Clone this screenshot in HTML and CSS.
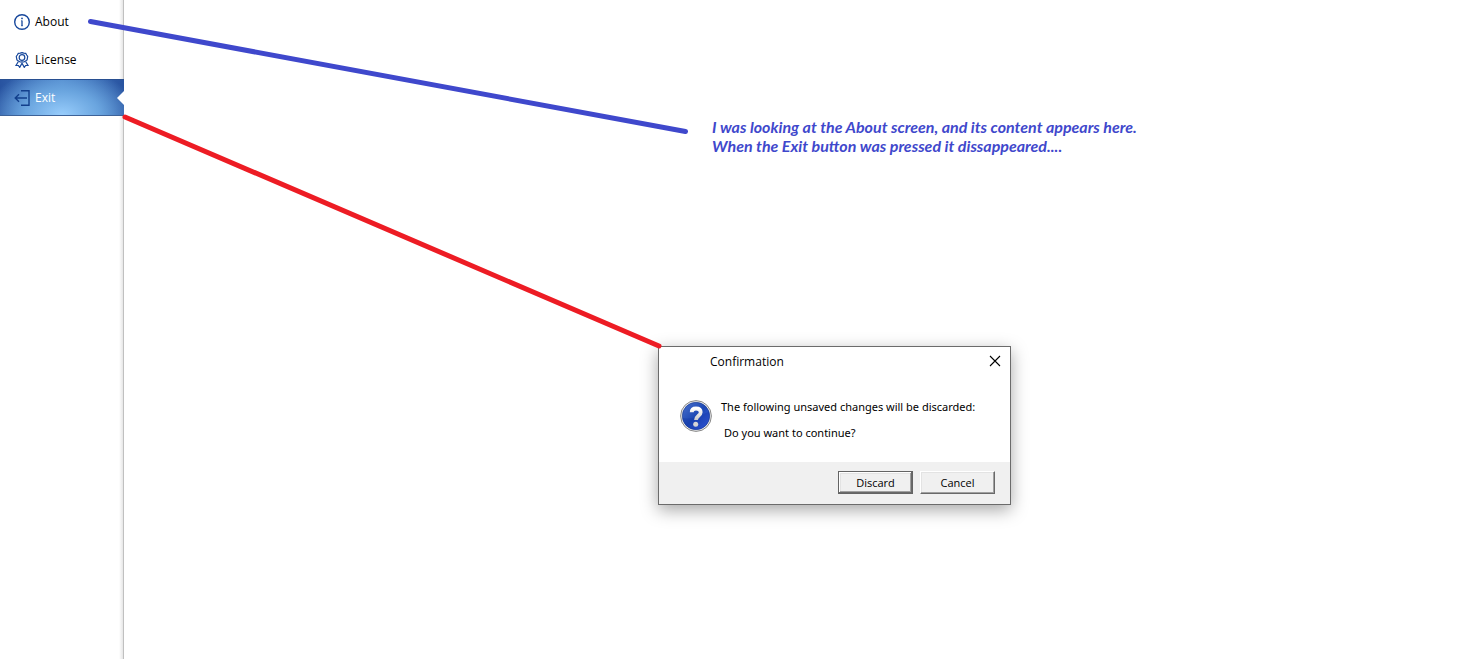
FILE: index.html
```html
<!DOCTYPE html>
<html lang="en">
<head>
<meta charset="utf-8">
<title>Confirmation</title>
<link rel="stylesheet" href="styles.css">
</head>
<body>
<div class="app">
  <nav class="sidebar">
    <button class="nav-item" type="button">
      <svg class="nav-icon" viewBox="0 0 16 16" width="16" height="16" fill="none" stroke="#17479b">
        <circle cx="8" cy="8" r="7.300" stroke-width="1.400"/>
        <path d="M8 6.500v5.500" stroke-width="1.300"/>
        <path d="M7 6.800h1M7 11.800h2" stroke-width=".6"/>
        <rect x="7.200" y="3.700" width="1.600" height="1.500" fill="#17479b" stroke="none"/>
      </svg>
      <span>About</span>
    </button>
    <button class="nav-item" type="button">
      <svg class="nav-icon" viewBox="0 0 16 16" width="16" height="16" fill="none" stroke="#17479b">
        <path d="M8 .6l1.800.5 1.900.3 1 1.600 1 1.500-.3 1.700-.3 1.700-1.600 1.100L9.900 10 8 9.900 6.100 10 4.500 9 2.900 7.900l-.3-1.700-.3-1.700 1-1.500 1-1.600 1.900-.3z" stroke-width="1.200"/>
        <circle cx="8" cy="5.500" r="2.800" stroke-width="1.200"/>
        <path d="M4.400 9.500L2 13.400l2.400.1 1.300 1.900L8 11.200l2.300 4.200 1.300-1.900 2.400-.1-2.400-3.900" stroke-width="1.200"/>
      </svg>
      <span>License</span>
    </button>
    <button class="nav-item nav-item-active" type="button">
      <svg class="nav-icon" viewBox="0 0 16 16" width="16" height="16" fill="none" stroke="#123f8c" stroke-width="1.400">
        <path d="M7 .8h8v14.400H7M13 8H1.200M5 4.200L1.200 8 5 11.800"/>
      </svg>
      <span>Exit</span>
    </button>
  </nav>
  <main class="stage">
    <p class="note">I was looking at the About screen, and its content appears here.<br>When the Exit button was pressed it dissappeared....</p>
    <section class="dialog" role="dialog" aria-labelledby="dialog-title">
      <header class="dialog-header">
        <h1 class="dialog-title" id="dialog-title">Confirmation</h1>
        <button class="close" type="button" aria-label="Close">
          <svg viewBox="0 0 12 12" width="12" height="12" stroke="#000" stroke-width="1.100"><path d="M1 1l10 10M11 1L1 11"/></svg>
        </button>
      </header>
      <div class="dialog-body">
        <svg class="question" viewBox="0 0 32 32" width="32" height="32">
          <defs>
            <linearGradient id="ball" x1="0" y1="0" x2="1" y2="1"><stop offset="0" stop-color="#4a70cc"/><stop offset=".5" stop-color="#1c48b4"/><stop offset="1" stop-color="#3f64ee"/></linearGradient>
            <linearGradient id="mark" x1="0" y1="0" x2="0" y2="1"><stop offset="0" stop-color="#fff"/><stop offset="1" stop-color="#c9c9c9"/></linearGradient>
          </defs>
          <circle cx="16" cy="16" r="15.400" fill="#eee" stroke="#898989"/>
          <circle cx="16" cy="16" r="13.700" fill="url(#ball)" stroke="#12358c" stroke-width=".6"/>
          <path d="M2.500 18C12 20 22 15 29 11.500A13.700 13.700 0 0 1 16 29.500C9 29.500 3.500 25 2.500 18z" fill="#0e2fa0" opacity=".3"/>
          <path d="M11.700 12.300C11.700 9.300 13.500 8.500 16 8.500c2.700 0 4.700 1.200 4.700 3.700 0 3.500-4.700 3.600-4.700 7.800" fill="none" stroke="url(#mark)" stroke-width="3.800"/>
          <circle cx="15.700" cy="24.300" r="2.500" fill="#d5d5d5"/>
        </svg>
        <div class="message">
          <p>The following unsaved changes will be discarded:</p>
          <p class="prompt">Do you want to continue?</p>
        </div>
      </div>
      <footer class="dialog-footer">
        <button class="btn btn-default" type="button">Discard</button>
        <button class="btn" type="button">Cancel</button>
      </footer>
    </section>
  </main>
  <svg class="pointers" width="700" height="360" viewBox="0 0 700 360" fill="none" stroke-width="5" stroke-linecap="round" aria-hidden="true">
    <path d="M90.500 21.500L685.500 131.500" stroke="#3f48cc"/>
    <path d="M125 117L659 346" stroke="#ed1c24"/>
  </svg>
</div>
</body>
</html>
```
FILE: styles.css
```css
* {
  box-sizing: border-box;
}

body {
  margin: 0;
  background: #fff;
  color: #000;
  font-family: "Open Sans", "Noto Sans", sans-serif;
  font-size: 11px;
}

p,
h1 {
  margin: 0;
}

button {
  font: inherit;
  color: inherit;
}

.app {
  position: relative;
  display: grid;
  grid-template-columns: 124px 1fr;
  min-height: 100vh;
}

.sidebar {
  display: flex;
  flex-direction: column;
  gap: 1px;
  padding-top: 3px;
  background: linear-gradient(to left, #c0c0c0 1px, #e6e6e6 1px, #fff 5px);
}

.nav-item {
  display: flex;
  align-items: center;
  gap: 5px;
  height: 37px;
  padding: 0 14px;
  border: 0;
  background: none;
  font-size: 12px;
}

.nav-icon {
  flex: none;
}

.nav-item-active {
  position: relative;
  border-top: 1px solid #284f91;
  border-bottom: 1px solid #3d6298;
  background: radial-gradient(ellipse 75px 48px at 50% 100%, #98cdfc, #6aa5df 50%, transparent 100%), linear-gradient(to right, #2853a0, #4a82c8 50%, #2853a0);
  color: #fff;
}

.nav-item-active::after {
  content: "";
  position: absolute;
  top: 11px;
  right: 0;
  border: 7px solid transparent;
  border-right-color: #fff;
  border-left-width: 0;
}

.stage {
  position: relative;
}

.note {
  position: absolute;
  top: 117px;
  left: 588px;
  color: #3f48cc;
  font-family: Lato, sans-serif;
  font-size: 16px;
  font-style: italic;
  font-weight: 700;
  line-height: 19px;
  white-space: nowrap;
}

.dialog {
  position: absolute;
  top: 346px;
  left: 534px;
  width: 353px;
  border: 1px solid #6b6b6b;
  background: #fff;
  box-shadow: 0 5px 16px rgba(0, 0, 0, 0.35);
}

.dialog-header {
  display: flex;
  align-items: center;
  justify-content: space-between;
  height: 28px;
  padding: 0 9px 0 51px;
}

.dialog-title {
  font-size: 12px;
  font-weight: 400;
}

.close {
  display: flex;
  padding: 0;
  border: 0;
  background: none;
}

.dialog-body {
  display: flex;
  gap: 9px;
  padding: 24px 21px 21px;
}

.question {
  flex: none;
  margin-top: 1px;
}

.message {
  display: grid;
  gap: 10px;
  font-family: "Noto Sans", "Open Sans", sans-serif;
  line-height: 16px;
  white-space: nowrap;
}

.prompt {
  padding-left: 3px;
}

.dialog-footer {
  display: flex;
  justify-content: flex-end;
  gap: 7px;
  padding: 9px 15px 10px;
  background: #f0f0f0;
}

.btn {
  width: 75px;
  height: 23px;
  padding: 0;
  border: 1px solid;
  border-color: #fff #696969 #696969 #fff;
  background: #f0f0f0;
  box-shadow: inset -1px -1px #a0a0a0, inset 1px 1px #e3e3e3;
}

.btn-default {
  border-color: #646464;
  box-shadow: inset -1px -1px #696969, inset 1px 1px #fff, inset -2px -2px #a0a0a0, inset 2px 2px #e3e3e3;
}

.pointers {
  position: absolute;
  top: 0;
  left: 0;
  pointer-events: none;
}
```
